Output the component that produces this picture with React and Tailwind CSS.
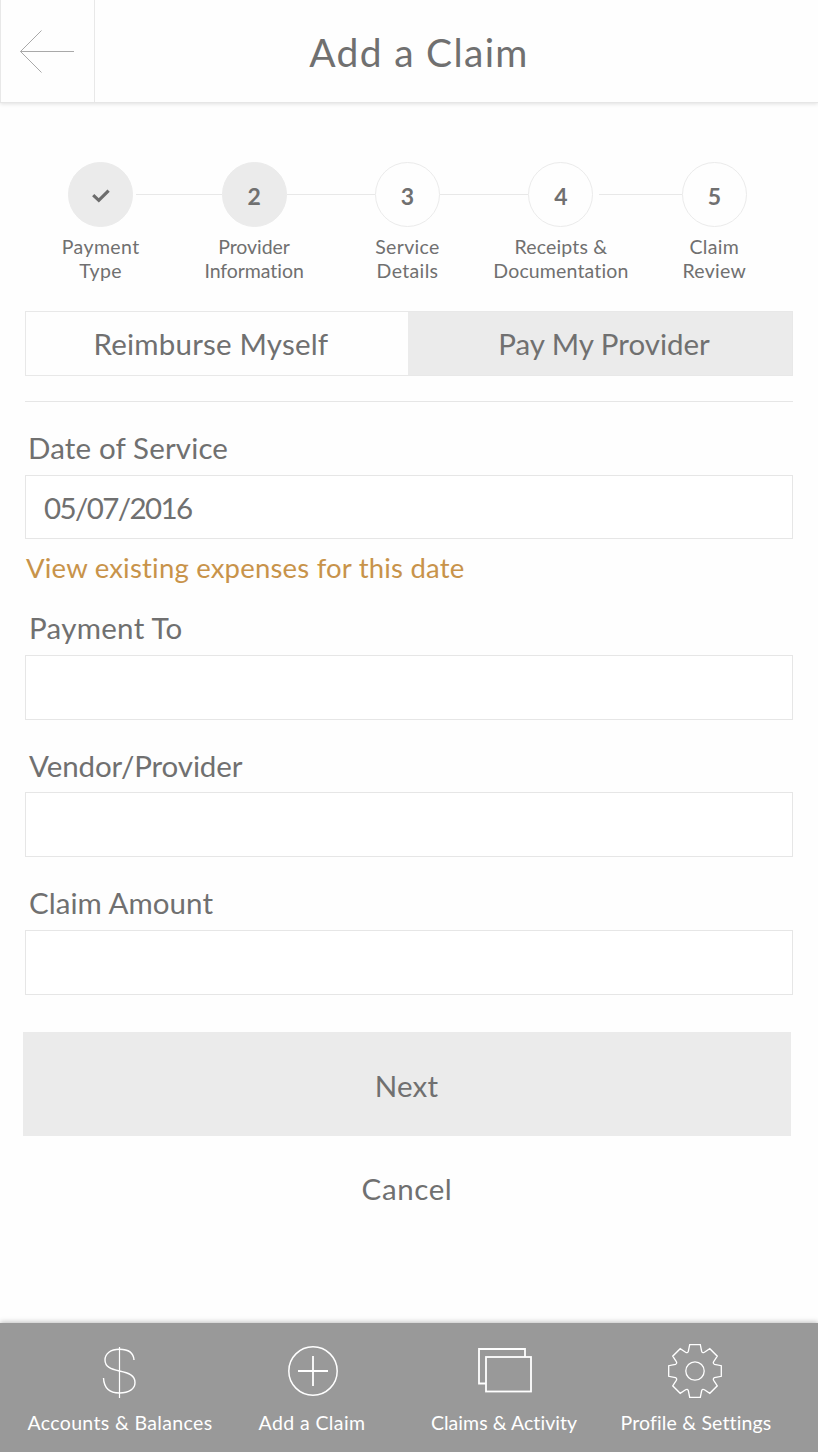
import React, { useState } from 'react';
import clsx from 'clsx';

// --- Configuration ---

const steps = [
  { lines: ['Payment', 'Type'], done: true, tracking: 'tracking-[0.4px]', gap: 'ml-[3px]' },
  { number: 2, lines: ['Provider', 'Information'], current: true, tracking: 'tracking-[-0.05px]' },
  { number: 3, lines: ['Service', 'Details'], tracking: 'tracking-[0.35px]' },
  { number: 4, lines: ['Receipts &', 'Documentation'], tracking: 'tracking-[0.15px]', gap: 'ml-[6px]' },
  { number: 5, lines: ['Claim', 'Review'], tracking: 'tracking-[0.3px]' },
];

const payees = [
  { id: 'self', label: 'Reimburse Myself', className: 'tracking-[0.2px] pr-[12px]' },
  { id: 'provider', label: 'Pay My Provider', className: 'pl-[8px]' },
];

// --- Icons ---

const BackIcon = () => (
  <svg className="mt-[2px] h-[46px] w-[56px]" viewBox="0 0 56 46" fill="none" stroke="#a9a9a9" strokeWidth="1">
    <path d="M22.5 1.5L1.5 22.5L22.5 43.5M1.5 22.5H55" />
  </svg>
);

const CheckIcon = () => (
  <svg className="mt-[3px] h-[14px] w-[18px]" viewBox="0 0 18 14" fill="none" stroke="#6c6c6c" strokeWidth="3.2">
    <path d="M1.2 6.2L6.8 11.4L16.6 1.6" />
  </svg>
);

const DollarIcon = () => (
  <svg className="h-[54px] w-[54px]" viewBox="0 0 54 54" fill="none" stroke="#fff" strokeWidth="1.4">
    <path d="M41 16C40.5 8.5 35 5.3 26.5 5.3C17.5 5.3 12 9.5 12 16C12 23 18 25 26.5 27C36 29 42 31.5 42 38.5C42 45 36 49 26.5 49C16.5 49 11 44 10.5 34" />
    <path d="M26.5 3V54" strokeWidth="1.2" />
  </svg>
);

const AddIcon = () => (
  <svg className="h-[54px] w-[54px]" viewBox="0 0 54 54" fill="none" stroke="#fff">
    <circle cx="28" cy="27" r="24.2" strokeWidth="1.5" />
    <path d="M28 12V42M13 27H43" strokeWidth="1.8" />
  </svg>
);

const ClaimsIcon = () => (
  <svg className="h-[54px] w-[56px]" viewBox="0 0 56 54" fill="none" stroke="#fff" strokeWidth="1.8">
    <path d="M10 39.5H3V5H49V13" />
    <rect x="10" y="13" width="45" height="34.5" />
  </svg>
);

const GearIcon = () => (
  <svg className="-ml-[2px] h-[54px] w-[54px]" viewBox="-27 -27 54 54" fill="none" stroke="#fff" strokeWidth="1.3">
    <path d="M-5.3-26.3H5.3L6.7-19.5Q7.6-17.6 9.4-18.7L14.8-22.3L22.3-14.8L18.7-9.4Q17.6-7.6 19.5-6.7L26.3-5.3V5.3L19.5 6.7Q17.6 7.6 18.7 9.4L22.3 14.8L14.8 22.3L9.4 18.7Q7.6 17.6 6.7 19.5L5.3 26.3H-5.3L-6.7 19.5Q-7.6 17.6-9.4 18.7L-14.8 22.3L-22.3 14.8L-18.7 9.4Q-17.6 7.6-19.5 6.7L-26.3 5.3V-5.3L-19.5-6.7Q-17.6-7.6-18.7-9.4L-22.3-14.8L-14.8-22.3L-9.4-18.7Q-7.6-17.6-6.7-19.5Z" />
    <circle r="9.2" />
  </svg>
);

const navItems = [
  { label: 'Accounts & Balances', icon: DollarIcon, tracking: 'tracking-[0.35px]' },
  { label: 'Add a Claim', icon: AddIcon, tracking: 'tracking-[0.4px]' },
  { label: 'Claims & Activity', icon: ClaimsIcon, tracking: 'tracking-[0.05px]' },
  { label: 'Profile & Settings', icon: GearIcon, tracking: 'tracking-[0.15px]' },
];

// --- Pieces ---

const Connector = ({ hidden, gap }) => (
  <span className="flex-1">
    <span className={clsx('block h-px', !hidden && 'bg-[#e8e8e8]', gap)} />
  </span>
);

const Step = ({ step, first, last }) => (
  <li className="flex flex-col items-center">
    <div className="flex w-full items-center">
      <Connector hidden={first} />
      <span
        className={clsx(
          'flex size-[65px] shrink-0 items-center justify-center rounded-full border border-[#ebebeb] text-[23px] font-bold',
          (step.done || step.current) && 'bg-[#ebebeb]'
        )}
      >
        {step.done ? <CheckIcon /> : <span className="mt-[3px]">{step.number}</span>}
      </span>
      <Connector hidden={last} gap={step.gap} />
    </div>
    <p className={clsx('mt-[8px] text-center text-[19.5px] leading-6 whitespace-nowrap', step.tracking)}>
      {step.lines[0]}
      <br />
      {step.lines[1]}
    </p>
  </li>
);

const fieldClass = 'block w-full border border-[#e6e6e6] bg-white pl-[18px] tracking-[-1.6px] outline-none';

function App() {
  const [payee, setPayee] = useState('provider');
  const [date, setDate] = useState('05/07/2016');

  return (
    <div className="flex h-screen flex-col overflow-hidden bg-[#fefefe] font-['Lato',sans-serif] text-[29.5px] leading-9 text-[#707070]">
      {/* --- Header --- */}
      <header className="flex h-[103px] shrink-0 border-b border-[#e6e6e6] shadow-[0_1px_4px_rgba(0,0,0,0.12)]">
        <button className="flex w-[95px] items-center border-x border-[#e8e8e8] pl-[18px]">
          <BackIcon />
        </button>
        <h1 className="flex-1 pt-[34px] pr-[75px] text-center text-[39px] tracking-[1.3px]">Add a Claim</h1>
      </header>

      <main className="flex-1 pt-[59px]">
        {/* --- Progress --- */}
        <ol className="ml-[24px] grid w-[767px] grid-cols-5">
          {steps.map((step, i) => (
            <Step key={i} step={step} first={i === 0} last={i === steps.length - 1} />
          ))}
        </ol>

        <form className="mx-[25px]" onSubmit={(e) => e.preventDefault()}>
          <div className="mt-[28px] grid h-[65px] grid-cols-[382px_1fr] border border-[#e8e8e8]">
            {payees.map((p) => (
              <button
                key={p.id}
                type="button"
                className={clsx('pt-px', p.className, payee === p.id && 'bg-[#ebebeb]')}
                onClick={() => setPayee(p.id)}
              >
                {p.label}
              </button>
            ))}
          </div>

          <hr className="mt-[25px] border-[#e6e6e6]" />

          <label className="mt-[28px] block pl-[3px] tracking-[0.15px]" htmlFor="date">Date of Service</label>
          <input
            id="date"
            className={clsx(fieldClass, 'mt-[9px] h-[64px]')}
            value={date}
            onChange={(e) => setDate(e.target.value)}
          />
          <a className="mt-[11px] block pl-px text-[27.5px] tracking-[0.2px] text-[#c8934a]" href="#expenses">
            View existing expenses for this date
          </a>

          <label className="mt-[24px] block pl-[4px] tracking-[0.3px]" htmlFor="payment">Payment To</label>
          <input id="payment" className={clsx(fieldClass, 'mt-[9px] h-[65px]')} />

          <label className="mt-[28px] block pl-[4px] tracking-[-0.1px]" htmlFor="vendor">Vendor/Provider</label>
          <input id="vendor" className={clsx(fieldClass, 'mt-[8px] h-[65px]')} />

          <label className="mt-[28px] block pl-[4px] tracking-[0.05px]" htmlFor="amount">Claim Amount</label>
          <input id="amount" className={clsx(fieldClass, 'mt-[9px] h-[65px]')} />
        </form>

        <div className="mt-[37px] ml-[23px] flex w-[768px] flex-col">
          <button className="h-[104px] bg-[#ebebeb] pt-[4px] pr-px tracking-[0.2px]">Next</button>
          <button className="mt-[35px] tracking-[0.6px]">Cancel</button>
        </div>
      </main>

      {/* --- Tab bar --- */}
      <nav className="h-[129px] shrink-0 bg-[#999] shadow-[0_-1px_5px_rgba(0,0,0,0.25)]">
        <div className="ml-[24px] grid w-[768px] grid-cols-4 pt-[21px]">
          {navItems.map(({ label, icon: Icon, tracking }) => (
            <a
              key={label}
              className={clsx('flex flex-col items-center text-[19.5px] leading-6 whitespace-nowrap text-white', tracking)}
              href="#"
            >
              <Icon />
              <span className="mt-[13px]">{label}</span>
            </a>
          ))}
        </div>
      </nav>
    </div>
  );
}

export default App;
